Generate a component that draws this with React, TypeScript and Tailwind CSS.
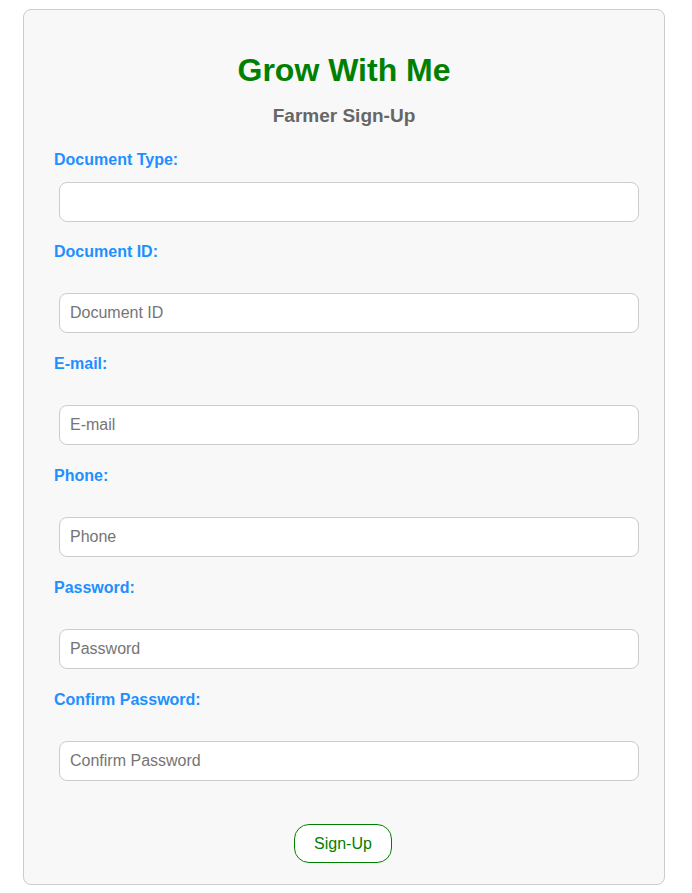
import { useState } from "react";

const fields = [
  { label: "Document ID:", placeholder: "Document ID", type: "text", gap: "mt-[21px]" },
  { label: "E-mail:", placeholder: "E-mail", type: "email", gap: "mt-[22px]" },
  { label: "Phone:", placeholder: "Phone", type: "tel", gap: "mt-[22px]" },
  { label: "Password:", placeholder: "Password", type: "password", gap: "mt-[22px]" },
  { label: "Confirm Password:", placeholder: "Confirm Password", type: "password", gap: "mt-[22px]" },
];

const inputClass =
  "ml-[5px] block h-[40px] w-[580px] rounded-[8px] border border-[#cccccc] bg-white px-[10px] text-[16px] text-black outline-none placeholder:text-[#757575]";

export default function App() {
  const [docType, setDocType] = useState("");

  return (
    <div className="min-h-[893px] bg-white pt-[9px] font-['Liberation_Sans',Arial,sans-serif]">
      <div className="ml-[23px] w-[642px] rounded-[8px] border border-[#cccccc] bg-[#f8f8f8] pb-[21px] pl-[30px] pr-[30px] pt-[42px]">
        <h1 className="text-center text-[32px] font-bold leading-[37px] text-[#008000]">
          Grow With Me
        </h1>
        <h3 className="mt-[16px] text-center text-[19px] font-bold leading-[22px] text-[#666666]">
          Farmer Sign-Up
        </h3>

        <label className="mt-[24px] block text-[16px] font-bold leading-[18px] text-[#1e90ff]">
          Document Type:
        </label>
        <input
          value={docType}
          onChange={(e) => setDocType(e.target.value)}
          className={`mt-[13px] ${inputClass}`}
        />

        {fields.map((f) => (
          <div key={f.label}>
            <label className={`${f.gap} block text-[16px] font-bold leading-[18px] text-[#1e90ff]`}>
              {f.label}
            </label>
            <input
              type={f.type}
              placeholder={f.placeholder}
              className={`mt-[32px] ${inputClass}`}
            />
          </div>
        ))}

        <div className="mt-[43px] flex justify-center pr-[2px]">
          <button className="h-[39px] w-[98px] rounded-[15px] border border-[#008000] bg-white text-[16px] text-[#008000]">
            Sign-Up
          </button>
        </div>
      </div>
    </div>
  );
}
